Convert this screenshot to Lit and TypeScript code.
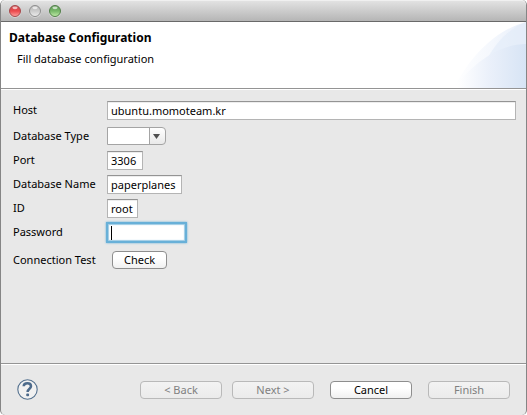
import { LitElement, html, css, svg } from "lit";
import { customElement } from "lit/decorators.js";

@customElement("app-root")
export class AppRoot extends LitElement {
  static styles = css`
    * { box-sizing: border-box; }
    :host {
      display: flex;
      flex-direction: column;
      min-height: 100vh;
      box-sizing: border-box;
      background: #e8e8e8;
      border-left: 1px solid #858585;
      border-right: 1px solid #858585;
      border-radius: 5px;
      color: #000;
      font: 11px/16px "Noto Sans", "Open Sans", sans-serif;
    }
    .titlebar {
      display: flex;
      align-items: center;
      gap: 4px;
      height: 22px;
      padding-left: 6px;
      border-bottom: 1px solid #696969;
      border-top: 1px solid #f0f0f0;
      border-radius: 5px 5px 0 0;
      background: linear-gradient(#e2e2e2, #b5b5b5);
    }
    .light { width: 16px; height: 16px; display: block; }
    header {
      position: relative;
      height: 67px;
      padding: 7px 8px;
      background: #fff;
      border-bottom: 1px solid #949494;
    }
    .wave { position: absolute; right: 0; top: 0; width: 76px; height: 66px; }
    h1 { margin: 0; font-size: 12px; line-height: 18px; font-weight: 700; }
    header p { margin: 4px 8px; }
    form { flex: 1; display: flex; flex-direction: column; margin: 0; border-top: 1px solid #fff; }
    .fields {
      flex: 1;
      display: grid;
      grid-template-columns: 94px 1fr;
      grid-template-rows: 26px 25px repeat(4, 24px) 32px;
      align-items: center;
      justify-items: start;
      padding: 7px 10px 0 12px;
    }
    input {
      height: 19px;
      padding: 0 3px;
      border: 1px solid #b4b4b4;
      border-top-color: #949494;
      border-radius: 0;
      background: #fff;
      box-shadow: inset 0 1px #ededed;
      font: inherit;
      color: #000;
      outline: none;
    }
    .wide { width: 100%; }
    .port { width: 36px; }
    .name { width: 75px; }
    .id { width: 31px; }
    .entry { position: relative; height: 19px; }
    .password {
      display: block;
      width: 79px;
      border-color: #68b0d8;
      box-shadow: 0 0 0 1px #68b0d8, 0 0 2px 1px #68b0d8, inset 0 0 1px 1px #9dcbe5;
      caret-color: transparent;
    }
    .caret { position: absolute; left: 4px; top: 3px; width: 1px; height: 14px; background: #000; pointer-events: none; }
    .combo { position: relative; width: 59px; height: 18px; }
    select {
      appearance: none;
      display: block;
      width: 100%;
      height: 100%;
      border: 1px solid #a4a4a4;
      border-radius: 0 4px 4px 0;
      background: linear-gradient(90deg, #fff 41px, #a4a4a4 41px, #a4a4a4 42px, transparent 42px),
        linear-gradient(#fff, #e9e9e9);
      font: inherit;
    }
    .arrow { position: absolute; right: 6px; top: 7px; width: 7px; height: 5px; pointer-events: none; }
    button {
      height: 18px;
      padding: 0;
      border: 1px solid #8e8e8e;
      border-radius: 4px;
      background: linear-gradient(#fff 40%, #f0f0f0);
      font: inherit;
      color: #000;
    }
    button:disabled { color: #808080; border-color: #b9b9b9; background: linear-gradient(#f3f3f3, #ebebeb); }
    .check { width: 55px; margin-left: 5px; }
    footer {
      display: flex;
      align-items: center;
      justify-content: flex-end;
      height: 52px;
      padding: 0 16px;
      border-top: 1px solid #949494;
      box-shadow: inset 0 1px #fff;
    }
    footer button { width: 82px; }
    .help { width: 21px; height: 21px; border: 0; background: none; margin-right: auto; }
    .help svg { display: block; width: 21px; height: 21px; }
    .group { display: flex; gap: 10px; }
    .actions { display: flex; gap: 16px; }
  `;

  private light(name: string, top: string, mid: string, low: string, rim: string) {
    return svg`<svg class="light" viewBox="0 0 16 16" aria-label=${name}>
      <defs>
        <linearGradient id=${name} x1="0" y1="0" x2="0" y2="1">
          <stop offset="0" stop-color=${top}/><stop offset=".5" stop-color=${mid}/><stop offset="1" stop-color=${low}/>
        </linearGradient>
      </defs>
      <circle cx="8" cy="8.5" r="6.2" fill="#eee" opacity=".6"/>
      <circle cx="8" cy="8" r="5.5" fill=${`url(#${name})`} stroke=${rim}/>
      <ellipse cx="8" cy="4.8" rx="2.6" ry="1.4" fill="#fff" opacity=".65"/>
    </svg>`;
  }

  firstUpdated() {
    this.renderRoot.querySelector<HTMLInputElement>("#password")?.focus();
  }

  render() {
    return html`
      <div class="titlebar">
        ${this.light("close", "#c9474b", "#ec4a4d", "#ffa5a1", "#a44a4c")}
        ${this.light("minimize", "#b5b5b5", "#cccccc", "#eeeeee", "#8d8d8d")}
        ${this.light("zoom", "#5b9650", "#78b86a", "#c2eda9", "#527e4a")}
      </div>
      <header>
        <svg class="wave" viewBox="0 0 76 66" preserveAspectRatio="none" aria-hidden="true">
          <defs>
            <linearGradient id="back"><stop offset="0" stop-color="#fff"/><stop offset=".5" stop-color="#f5f8fd"/><stop offset="1" stop-color="#e8effa"/></linearGradient>
            <linearGradient id="front"><stop offset=".05" stop-color="#fff"/><stop offset=".5" stop-color="#eaf0fa"/><stop offset="1" stop-color="#d7e4f5"/></linearGradient>
          </defs>
          <path d="M4 66C20 34 46 8 76 0V66Z" fill="url(#back)"/>
          <path d="M38 36C46 20 60 6 76 0V66H38Z" fill="#e1ebf9" opacity=".6"/>
          <path d="M4 66C22 42 48 22 76 22V66Z" fill="url(#front)"/>
        </svg>
        <h1>Database Configuration</h1>
        <p>Fill database configuration</p>
      </header>
      <form @submit=${(e: Event) => e.preventDefault()}>
        <div class="fields">
          <label for="host">Host</label>
          <input id="host" class="wide" .value=${"ubuntu.momoteam.kr"} />
          <label for="type">Database Type</label>
          <div class="combo">
            <select id="type"><option></option></select>
            <svg class="arrow" viewBox="0 0 7 5" preserveAspectRatio="none" aria-hidden="true"><path d="M0 0H7L3.5 5Z" fill="#505050"/></svg>
          </div>
          <label for="port">Port</label>
          <input id="port" class="port" .value=${"3306"} />
          <label for="name">Database Name</label>
          <input id="name" class="name" .value=${"paperplanes"} />
          <label for="id">ID</label>
          <input id="id" class="id" .value=${"root"} />
          <label for="password">Password</label>
          <div class="entry">
            <input id="password" class="password" type="password" />
            <span class="caret"></span>
          </div>
          <label for="check">Connection Test</label>
          <button id="check" class="check" type="button">Check</button>
        </div>
        <footer>
          <button class="help" type="button" aria-label="Help">
            <svg viewBox="0 0 21 21" aria-hidden="true">
              <circle cx="10.5" cy="10.5" r="9.7" fill="#f1f1f1" stroke="#54718f" stroke-width="1.1"/>
              <path d="M6.7 7.2C6.9 3.4 14 3.3 14 7.3C14 9.8 10.6 9.6 10.6 13" fill="none" stroke="#4c6a8b" stroke-width="2.5"/>
              <rect x="9.2" y="14.5" width="2.9" height="2.8" rx="1" fill="#4c6a8b"/>
            </svg>
          </button>
          <div class="actions">
            <div class="group">
              <button type="button" disabled>&lt; Back</button>
              <button type="button" disabled>Next &gt;</button>
            </div>
            <button type="button">Cancel</button>
            <button type="submit" disabled>Finish</button>
          </div>
        </footer>
      </form>
    `;
  }
}
